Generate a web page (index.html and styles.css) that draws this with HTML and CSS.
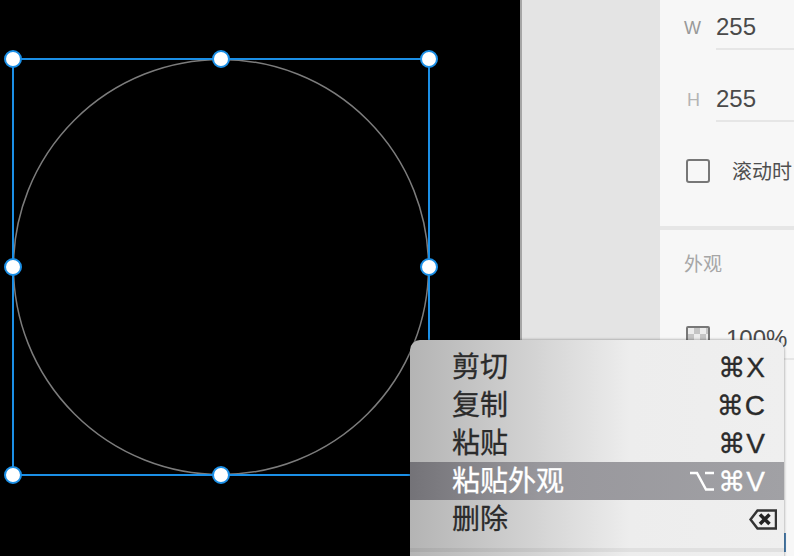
FILE: index.html
```html
<!DOCTYPE html>
<html lang="zh-CN">
<head>
    <meta charset="UTF-8">
    <title>粘贴外观</title>
    <link rel="stylesheet" href="styles.css">
</head>
<body>
    <div class="app">
        <div class="canvas">
            <svg class="selection" width="520" height="556" viewBox="0 0 520 556">
                <circle class="shape" cx="221" cy="267" r="207.5"/>
                <rect class="frame" x="13" y="59" width="416" height="416"/>
                <circle class="handle" cx="13" cy="59" r="8"/>
                <circle class="handle" cx="221" cy="59" r="8"/>
                <circle class="handle" cx="429" cy="59" r="8"/>
                <circle class="handle" cx="13" cy="267" r="8"/>
                <circle class="handle" cx="429" cy="267" r="8"/>
                <circle class="handle" cx="13" cy="475" r="8"/>
                <circle class="handle" cx="221" cy="475" r="8"/>
                <circle class="handle" cx="429" cy="475" r="8"/>
            </svg>
        </div>
        <div class="gutter"></div>
        <div class="panel">
            <section class="panel-section size">
                <div class="field">
                    <span class="field-label">W</span>
                    <span class="field-value">255</span>
                </div>
                <div class="field">
                    <span class="field-label light">H</span>
                    <span class="field-value">255</span>
                </div>
                <div class="check-row">
                    <span class="checkbox"></span>
                    <span class="check-label">滚动时</span>
                </div>
            </section>
            <section class="panel-section look">
                <h2 class="section-title">外观</h2>
                <div class="opacity-row">
                    <span class="swatch"></span>
                    <span class="field-value">100%</span>
                </div>
            </section>
        </div>
    </div>

    <span class="edge-mark"></span>

    <div class="menu">
        <div class="menu-item"><span>剪切</span><span class="keys"><span class="sym">⌘</span>X</span></div>
        <div class="menu-item"><span>复制</span><span class="keys"><span class="sym">⌘</span>C</span></div>
        <div class="menu-item"><span>粘贴</span><span class="keys"><span class="sym">⌘</span>V</span></div>
        <div class="menu-item active"><span>粘贴外观</span><span class="keys"><svg class="option" width="24" height="20" viewBox="0 0 24 20"><path d="M0 2H7L16 18.5H24M15 2H24"/></svg><span class="sym">⌘</span>V</span></div>
        <div class="menu-item"><span>删除</span><span class="keys">
            <svg class="backspace" width="28" height="21" viewBox="0 0 28 21"><path class="outline" d="M27 1.5H8.5L1.5 10.5L8.5 19.5H27Z"/><path class="cross" d="M11 5.5L20.5 15M20.5 5.5L11 15"/></svg>
        </span></div>
        <div class="menu-sep"></div>
    </div>
</body>
</html>
```

FILE: styles.css
```css
html, body {
    margin: 0;
    height: 100%;
    overflow: hidden;
}
body {
    position: relative;
    font-family: "Liberation Sans", "Noto Sans CJK SC", sans-serif;
    background: #f7f7f7;
}
.app {
    display: flex;
    height: 556px;
}
.canvas {
    width: 520px;
    background: #000;
    flex-shrink: 0;
}
.selection {
    display: block;
}
.shape {
    fill: none;
    stroke: #7c7c7c;
    stroke-width: 1.5;
}
.frame {
    fill: none;
    stroke: #1b8fe6;
    stroke-width: 2;
}
.handle {
    fill: #fff;
    stroke: #1b8fe6;
    stroke-width: 2;
}
.gutter {
    width: 138px;
    flex-shrink: 0;
    background: #e4e4e4;
    border-left: 2px solid #a6a6a6;
}
.panel {
    flex: 1;
    overflow: hidden;
    background: #f7f7f7;
}
.panel-section {
    padding-left: 24px;
}
.size {
    height: 226px;
    border-bottom: 4px solid #e6e6e6;
    box-sizing: content-box;
}
.field {
    display: flex;
    align-items: flex-start;
    height: 72px;
}
.field-label {
    width: 16px;
    margin-top: 18px;
    text-align: right;
    font-size: 18px;
    line-height: 20px;
    color: #999;
}
.field-label.light {
    color: #b4b4b4;
}
.field-value {
    font-size: 24px;
    line-height: 26px;
    color: #4a4a4a;
}
.field .field-value {
    flex: 1;
    height: 34px;
    margin-left: 16px;
    padding-top: 14px;
    border-bottom: 2px solid #e6e6e6;
}
.check-row {
    display: flex;
    align-items: center;
    margin-top: 14px;
    margin-left: 2px;
}
.checkbox {
    width: 20px;
    height: 20px;
    flex-shrink: 0;
    border: 2px solid #777;
    border-radius: 3px;
}
.check-label {
    margin-left: 22px;
    padding-top: 2px;
    font-size: 20px;
    line-height: 24px;
    color: #4f4f4f;
    white-space: nowrap;
}
.look {
    height: 130px;
    box-sizing: border-box;
    border-bottom: 2px solid #e6e6e6;
}
.section-title {
    margin: 0;
    padding-top: 23px;
    font-size: 19px;
    line-height: 24px;
    font-weight: normal;
    color: #a6a6a6;
}
.opacity-row {
    display: flex;
    align-items: flex-start;
    margin-top: 49px;
    margin-left: 2px;
}
.swatch {
    width: 20px;
    height: 20px;
    flex-shrink: 0;
    border: 2px solid #777;
    border-radius: 2px;
    background: repeating-conic-gradient(#c4c4c4 0 25%, #ececec 0 50%) 0 0 / 12px 12px;
}
.opacity-row .field-value {
    margin-left: 16px;
}
.edge-mark {
    position: absolute;
    left: 784px;
    top: 533px;
    width: 2px;
    height: 19px;
    background: #4d7fae;
}
.menu {
    position: absolute;
    left: 410px;
    top: 340px;
    width: 374px;
    height: 230px;
    box-sizing: border-box;
    padding-top: 8px;
    border-radius: 10px 10px 0 0;
    background: linear-gradient(90deg, #b4b4b4 0, #d2d2d2 120px, #ededed 220px, #efefef 100%);
    box-shadow: 0 0 3px rgba(0,0,0,0.45);
    font-size: 28px;
    color: #2b2b2b;
    -webkit-text-stroke: 0.3px currentColor;
}
.menu-item {
    display: flex;
    justify-content: space-between;
    align-items: center;
    height: 38px;
    box-sizing: border-box;
    padding: 0 19px 0 42px;
    line-height: 37px;
}
.menu-item.active {
    background: linear-gradient(90deg, #747378 0, #98979c 130px, #a1a1a5 100%);
    color: #fff;
}
.keys {
    display: flex;
    align-items: center;
}
.sym {
    margin-right: 1px;
    font-family: "DejaVu Sans", sans-serif;
    font-size: 27px;
}
.option {
    margin-right: 4px;
    fill: none;
    stroke: #fff;
    stroke-width: 2.5;
}
.backspace {
    margin-right: -12px;
    fill: none;
}
.backspace .outline {
    stroke: #333;
    stroke-width: 2.5;
}
.backspace .cross {
    stroke: #222;
    stroke-width: 3.5;
}
.menu-sep {
    height: 4px;
    margin-top: 10px;
    background: linear-gradient(90deg, #a9a9a9 0, #c6c6c6 120px, #e0e0e0 220px);
}
```
